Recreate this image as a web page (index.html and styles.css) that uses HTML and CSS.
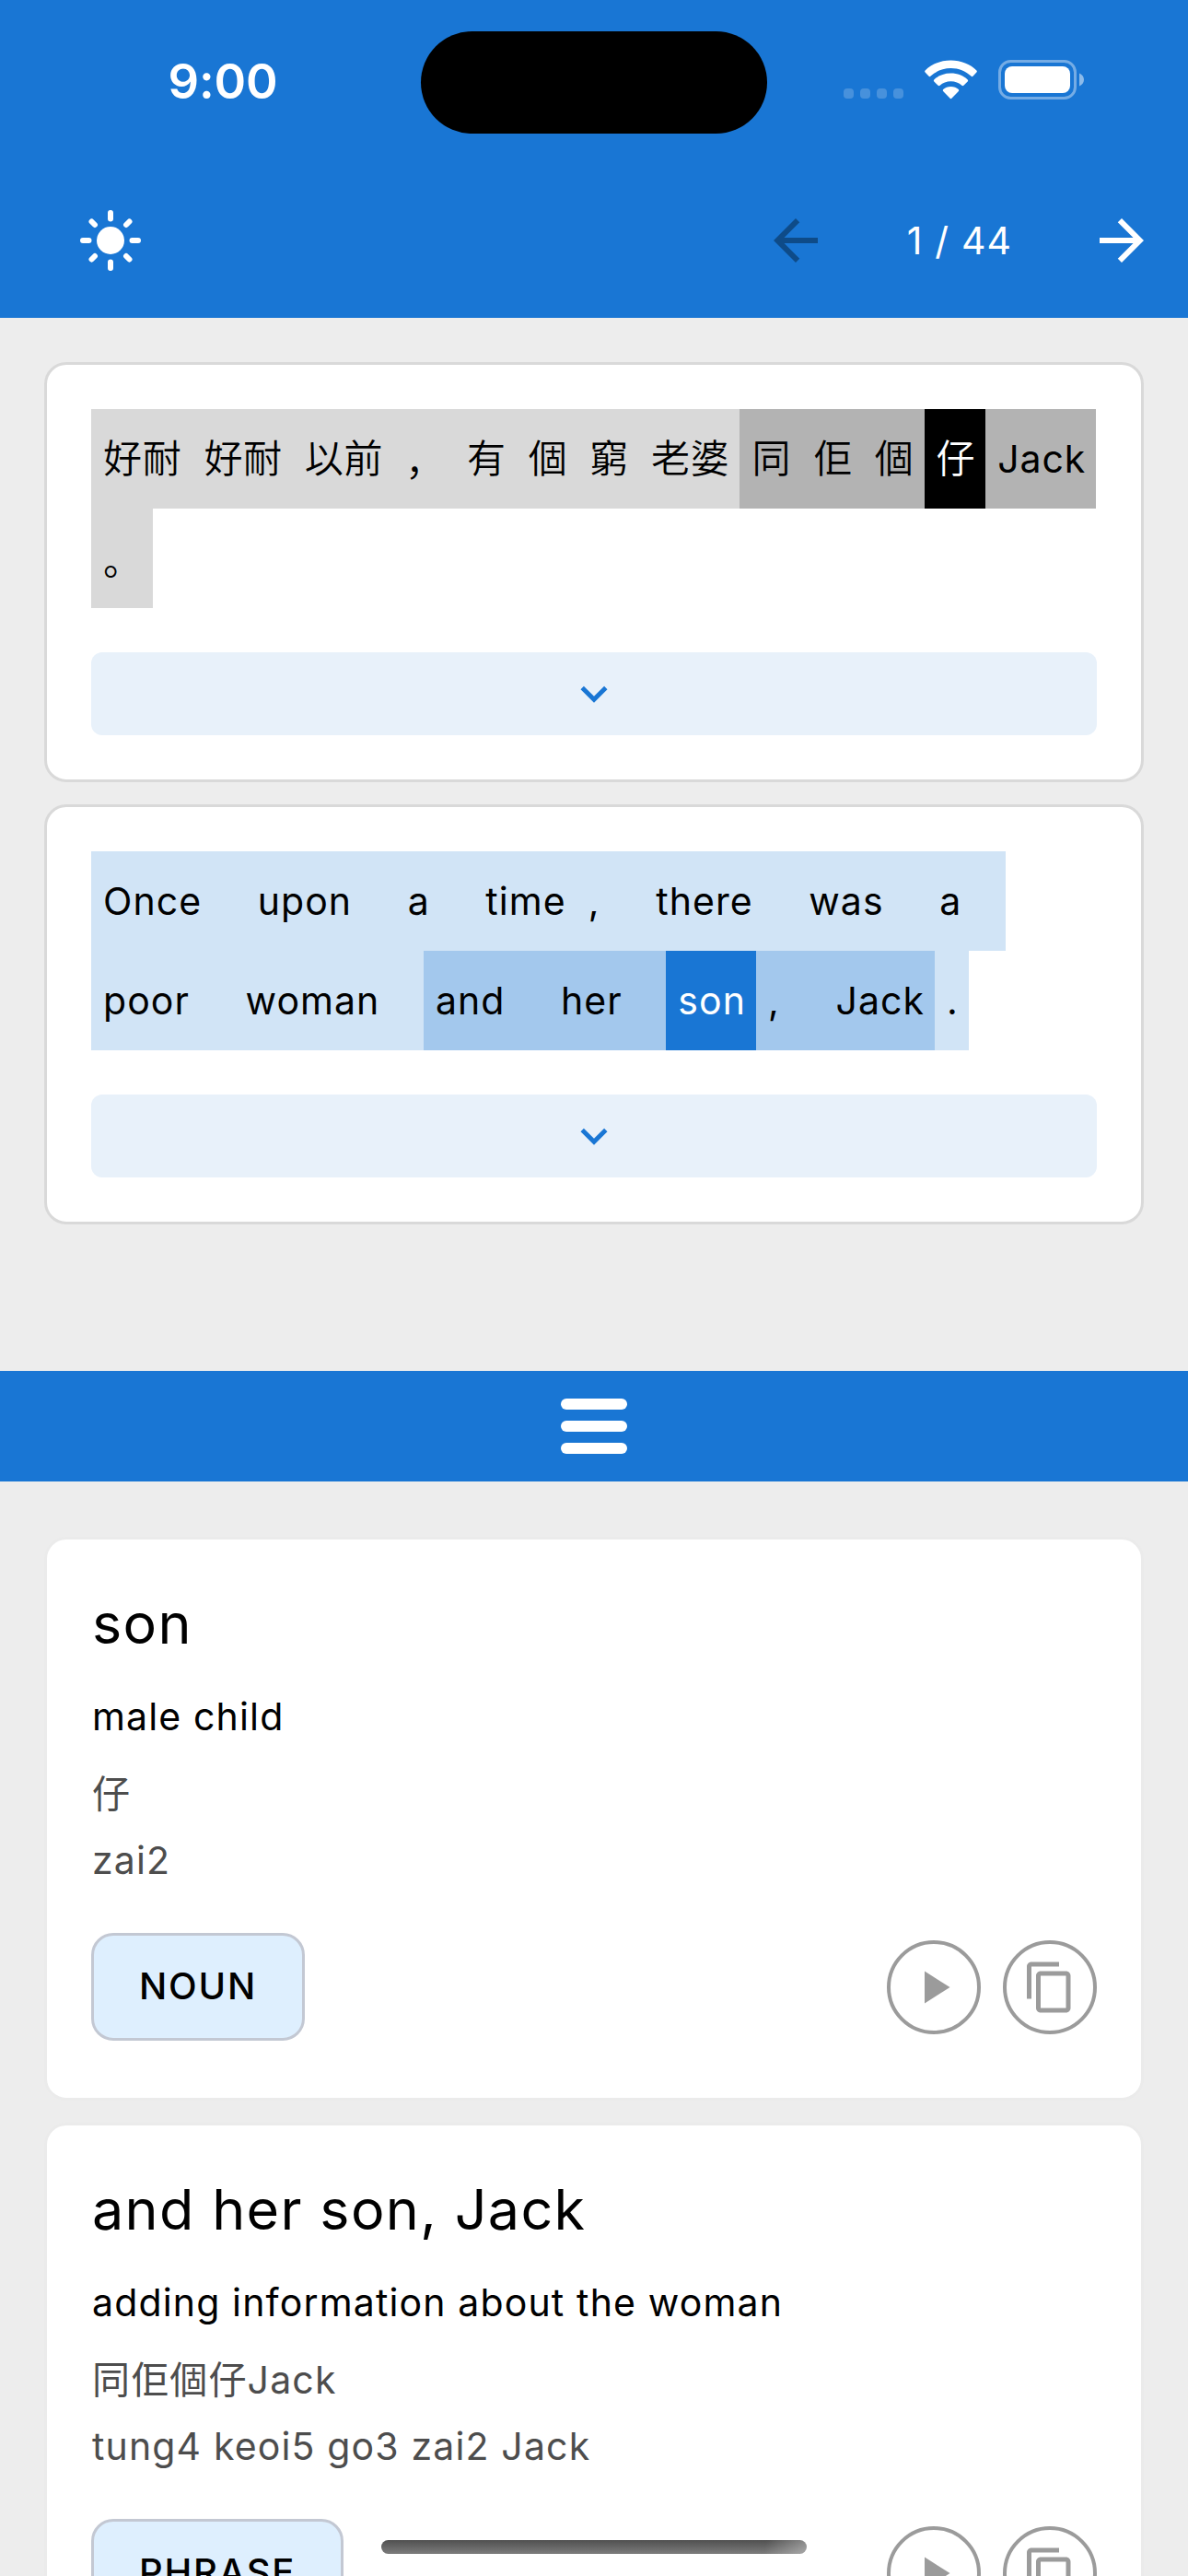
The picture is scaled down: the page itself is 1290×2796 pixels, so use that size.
FILE: index.html
```html
<!doctype html>
<html lang="en">
<head>
	<meta charset="utf-8">
	<meta name="viewport" content="width=device-width, initial-scale=1.0" />
	<title>Reader</title>
	<link rel="stylesheet" href="styles.css">
</head>
<body>
	<div class="screen">
		<header class="topbar">
			<div class="status">
				<div class="clock">9:00</div>
				<div class="island"></div>
				<div class="signals">
					<span class="dots"><i></i><i></i><i></i><i></i></span>
					<svg class="wifi" viewBox="0 0 57 43">
						<path d="M28.500 0.500C17.500 0.500 7.500 4.600 0.600 11.500Q-.3 12.500 .6 13.500L4.600 17.700Q5.600 18.600 6.600 17.600C12.400 12.200 20 9 28.500 9S44.600 12.200 50.400 17.600Q51.400 18.600 52.400 17.700L56.400 13.500Q57.300 12.500 56.400 11.500C49.500 4.600 39.500 .5 28.500 .5z"/>
						<path d="M28.500 14.500C21.300 14.500 15 17 10.300 21.400Q9.400 22.400 10.300 23.400L14.600 27.800Q15.600 28.700 16.600 27.800C19.700 25 23.900 23.300 28.500 23.300S37.300 25 40.400 27.800Q41.400 28.700 42.400 27.800L46.700 23.400Q47.600 22.400 46.700 21.400C42 17 35.700 14.500 28.500 14.500z"/>
						<path d="M28.500 29C25.200 29 22.400 30.100 20.200 31.900Q19.200 32.900 20.100 33.900L27.400 41.600Q28.500 42.700 29.600 41.600L36.900 33.900Q37.800 32.900 36.800 31.900C34.600 30.100 31.800 29 28.500 29z"/>
					</svg>
					<svg class="battery" viewBox="0 0 94 43">
						<rect x="1.500" y="1.500" width="82" height="40" rx="12" fill="none" stroke="#fff" stroke-width="3" opacity=".4"/>
						<rect x="7" y="7" width="71" height="29" rx="8"/>
						<path d="M88 14.500c3 1.200 5 4 5 7s-2 5.800-5 7z" opacity=".5"/>
					</svg>
				</div>
			</div>
			<nav class="tools">
				<svg class="sun" viewBox="-36 -36 72 72">
					<circle r="15"/>
					<path d="M0-30v6.500M0 30v-6.500M-30 0h6.500M30 0h-6.500M-20.500-20.500l3.500 3.500M20.500-20.500l-3.500 3.500M-20.500 20.500l3.500-3.500M20.500 20.500l-3.500-3.500"/>
				</svg>
				<div class="pager">
					<svg class="icon off" viewBox="0 0 24 24"><path d="M20 11H7.830l5.590-5.590L12 4l-8 8 8 8 1.410-1.410L7.830 13H20v-2z"/></svg>
					<span class="count">1 / 44</span>
					<svg class="icon" viewBox="0 0 24 24"><path d="M12 4l-1.410 1.410L16.170 11H4v2h12.170l-5.580 5.590L12 20l8-8z"/></svg>
				</div>
			</nav>
		</header>

		<main class="sentences">
			<section class="card">
				<div class="text zh">
					<div class="line"><span>好耐</span><span>好耐</span><span>以前</span><span class="punct">，</span><span>有</span><span>個</span><span>窮</span><span>老婆</span><span class="near">同</span><span class="near">佢</span><span class="near">個</span><span class="hit">仔</span><span class="near latin">Jack</span></div>
					<div class="line"><span class="punct">。</span></div>
				</div>
				<div class="expand"><svg viewBox="0 0 24 24"><path d="M16.590 8.590L12 13.170 7.410 8.590 6 10l6 6 6-6z"/></svg></div>
			</section>

			<section class="card">
				<div class="text en">
					<div class="line"><span>Once</span><span> </span><span>upon</span><span> </span><span>a</span><span> </span><span>time</span><span>,</span><span> </span><span>there</span><span> </span><span>was</span><span> </span><span>a</span><span> </span></div>
					<div class="line"><span>poor</span><span> </span><span>woman</span><span> </span><span class="near">and</span><span class="near"> </span><span class="near">her</span><span class="near"> </span><span class="hit">son</span><span class="near">,</span><span class="near"> </span><span class="near">Jack</span><span>.</span></div>
				</div>
				<div class="expand"><svg viewBox="0 0 24 24"><path d="M16.590 8.590L12 13.170 7.410 8.590 6 10l6 6 6-6z"/></svg></div>
			</section>
		</main>

		<!-- drag handle between the two panes -->
		<div class="divider"><i></i><i></i><i></i></div>

		<div class="results">
			<article class="entry">
				<h2>son</h2>
				<p class="meaning">male child</p>
				<p class="source">仔</p>
				<p class="source">zai2</p>
				<div class="actions">
					<span class="tag">NOUN</span>
					<span class="round"><svg viewBox="0 0 24 24"><path d="M8 5v14l11-7z"/></svg></span>
					<span class="round"><svg viewBox="0 0 24 24"><path d="M16 1H4c-1.100 0-2 .9-2 2v14h2V3h12V1zm3 4H8c-1.100 0-2 .9-2 2v14c0 1.100.9 2 2 2h11c1.100 0 2-.9 2-2V7c0-1.100-.9-2-2-2zm0 16H8V7h11v14z"/></svg></span>
				</div>
			</article>

			<article class="entry">
				<h2>and her son, Jack</h2>
				<p class="meaning">adding information about the woman</p>
				<p class="source">同佢個仔Jack</p>
				<p class="source">tung4 keoi5 go3 zai2 Jack</p>
				<div class="actions">
					<span class="tag">PHRASE</span>
					<span class="round"><svg viewBox="0 0 24 24"><path d="M8 5v14l11-7z"/></svg></span>
					<span class="round"><svg viewBox="0 0 24 24"><path d="M16 1H4c-1.100 0-2 .9-2 2v14h2V3h12V1zm3 4H8c-1.100 0-2 .9-2 2v14c0 1.100.9 2 2 2h11c1.100 0 2-.9 2-2V7c0-1.100-.9-2-2-2zm0 16H8V7h11v14z"/></svg></span>
				</div>
			</article>
		</div>

		<div class="home"></div>
	</div>
</body>
</html>
```
FILE: styles.css
```css
* {margin:0; padding:0; box-sizing:border-box;}
body {font:400 41px "Inter","Noto Sans CJK TC",sans-serif; letter-spacing:1.15px; color:#000; background:#ededed;}
svg {display:block; flex:none; fill:currentColor;}

.screen {position:relative; display:flex; flex-direction:column; width:1290px; height:2796px; overflow:hidden;}

/* top bar */
.topbar {flex:none; height:345px; color:#fff; background:#1976d4;}
.status {display:grid; grid-template-columns:457px 376px 457px; height:177px;}
.clock {padding:56px 0 0 27px; font-size:52.5px; font-weight:600; line-height:65px; letter-spacing:-0.2px; text-align:center;}
.island {height:111px; margin-top:33.5px; border-radius:56px; background:#000;}
.signals {display:flex; padding:65px 0 0 83px;}
.dots {display:flex; gap:7px; height:11px; margin-top:31px;}
.dots i {width:11px; height:11px; border-radius:4px; background:rgba(255,255,255,0.2);}
.wifi {width:57px; height:43px; margin-left:23px;}
.battery {width:94px; height:43px; margin-left:23px;}
.tools {display:flex; align-items:center; justify-content:space-between; height:168px; padding:0 36px 0 84px;}
.sun {width:72px; height:72px;}
.sun path {fill:none; stroke:currentColor; stroke-width:6; stroke-linecap:round;}
.pager {display:flex; align-items:center;}
.count {width:282px; padding-left:2px; text-align:center;}
.icon {width:72px; height:72px;}
.icon.off {opacity:0.6; color:#083057;}

/* sentence cards */
.sentences {flex:none; display:flex; flex-direction:column; gap:24px; height:1142.5px; padding:48px;}
.card {height:456px; padding:48px; border:3px solid #d9d9d9; border-radius:24px; background:#fff;}
.line {display:flex; height:108px; line-height:108px; white-space:pre;}
.line span {padding:0 11px 0 13px; background:#d9d9d9;}
.zh .line {font-size:42px; font-weight:350; letter-spacing:0.7px;}
.zh .near {background:#b3b3b3;}
.zh .hit {color:#fff; background:#000;}
.zh .punct {font-family:"Noto Sans CJK SC",sans-serif;}
.zh .latin {font-size:41px; font-weight:400; letter-spacing:0.9px;}
.en .line {letter-spacing:1.05px;}
.en .line span {background:#d1e4f6;}
.en .line .near {background:#a3c8ed;}
.en .line .hit {color:#fff; background:#1976d4;}
.expand {display:flex; align-items:center; justify-content:center; height:90px; margin-top:48px; border-radius:12px; color:#1976d4; background:#e8f1fa;}
.expand svg {width:58px; height:58px;}

.divider {flex:none; display:flex; flex-direction:column; align-items:center; justify-content:center; gap:12px; height:120px; background:#1976d4;}
.divider i {width:72px; height:12px; border-radius:6px; background:#fff;}

/* dictionary entries */
.results {display:flex; flex-direction:column; gap:24px; padding:60px 48px;}
.entry {flex:none; height:612px; padding:48px; border:3px solid #ebebeb; border-radius:24px; background:#fff;}
.entry h2 {padding-left:1px; font-size:61px; font-weight:400; line-height:87px; letter-spacing:1.35px;}
.meaning {margin:27.5px 0 17.5px; padding-left:1px; line-height:60px;}
.source {height:72px; padding-left:1px; line-height:72px; color:#4d4d4d;}
.actions {display:flex; align-items:center; gap:24px; margin-top:43.5px;}
.tag {height:117px; margin-right:auto; padding:0 49px; border:3px solid #c3c8d3; border-radius:24px; font-size:40px; font-weight:500; line-height:110px; letter-spacing:1.8px; background:#deeffe;}
.round {display:flex; align-items:center; justify-content:center; width:102px; height:102px; border:4.5px solid #9b9b9b; border-radius:50%; color:#9b9b9b;}
.round svg {width:60px; height:60px;}

/* home indicator floats over the list */
.home {position:absolute; left:414px; bottom:24px; width:462px; height:15px; border-radius:8px; background:linear-gradient(100deg,transparent 90%,rgba(255,255,255,0.35)),linear-gradient(#505050,#7c7c7c);}
```
